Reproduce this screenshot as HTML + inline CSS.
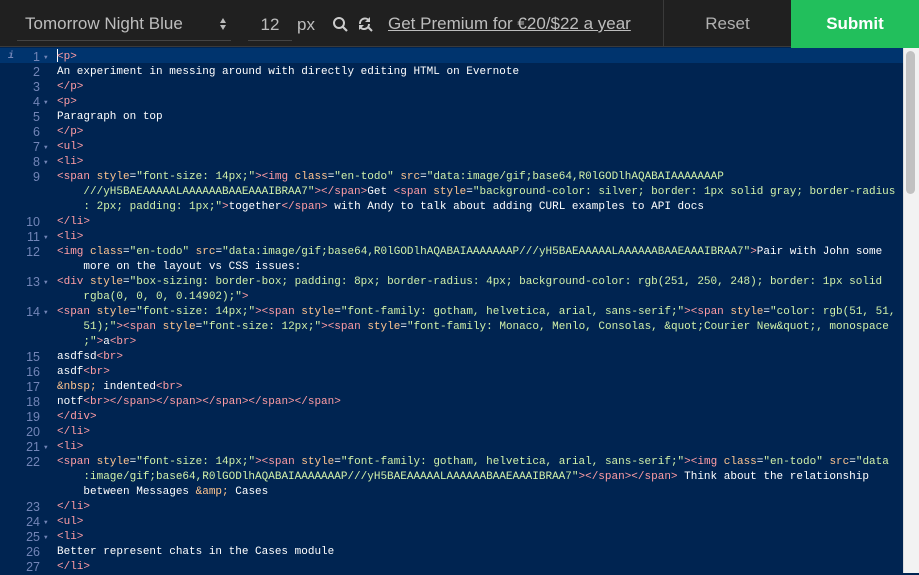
<!DOCTYPE html>
<html><head><meta charset="utf-8"><style>
*{margin:0;padding:0;box-sizing:border-box}
body{width:919px;height:573px;overflow:hidden;background:#002451;font-family:"Liberation Sans",sans-serif;position:relative}
#hdr{position:absolute;left:0;top:0;width:919px;height:47px;background:#202020;border-bottom:1px solid #3a3a3a}
.sel{position:absolute;left:17px;top:12px;width:214px;height:29px;border-bottom:1px solid #444;color:#bdbdbd;font-size:17px;padding-left:8px;line-height:24px}
.arr{position:absolute;right:4px;top:5px;width:8px;height:14px}
.fs{position:absolute;left:248px;top:12px;width:44px;height:29px;border-bottom:1px solid #444;color:#bdbdbd;font-size:17px;text-align:center;line-height:26px}
.px{position:absolute;left:297px;top:15px;color:#bdbdbd;font-size:17px}
.prem{position:absolute;left:388px;top:14px;color:#bdbdbd;font-size:17px;text-decoration:underline}
.reset{position:absolute;left:663px;top:0;width:128px;height:47px;border-left:1px solid #3a3a3a;color:#b0b0b0;font-size:17px;text-align:center;line-height:48px}
.sub{position:absolute;left:791px;top:0;width:128px;height:48px;background:#22bf5c;color:#fff;font-size:17px;font-weight:bold;text-align:center;line-height:48px}
#ed{position:absolute;left:0;top:48px;width:903px;height:525px;font-family:"Liberation Mono",monospace;font-size:11px;color:#fff}
.act{position:absolute;left:0;top:0;width:903px;height:15px;background:#00346e}
#rows{position:absolute;left:0;top:2px;width:903px;height:525px}
.r{position:absolute;left:57px;height:15px;line-height:15px;white-space:pre}
.n{position:absolute;left:0;width:40px;text-align:right;height:15px;line-height:15px;color:#7285b7;font-family:"Liberation Sans",sans-serif;font-size:12.5px}
.f{position:absolute;left:44px;color:#7285b7;font-size:6px;height:15px;line-height:15px}
.t{color:#ff9da4}.a{color:#ffc58f}.s{color:#d1f1a9}.e{color:#ffc58f}
#sb{position:absolute;left:903px;top:48px;width:16px;height:525px;background:#f2f2f2;border-left:1px solid #ddd}
#th{position:absolute;left:906px;top:51px;width:9px;height:143px;background:#c1c1c1;border-radius:5px}
</style></head><body>
<div id="hdr">
<div class="sel">Tomorrow Night Blue<svg class="arr" viewBox="0 0 8 14"><path d="M4 1L7 6H1Z M4 13L7 8H1Z" fill="#bbb"/></svg></div>
<div class="fs">12</div>
<div class="px">px</div>
<svg style="position:absolute;left:332px;top:16px" width="17" height="17" viewBox="0 0 17 17"><circle cx="7" cy="7" r="5" stroke="#ccc" stroke-width="2" fill="none"/><path d="M10.5 10.5L15 15" stroke="#ccc" stroke-width="2.2"/></svg>
<svg style="position:absolute;left:357px;top:16px" width="17" height="17" viewBox="0 0 17 17"><path d="M3 8A5 5 0 0 1 12 4.5M12 8A5 5 0 0 1 3 11" stroke="#ccc" stroke-width="2" fill="none"/><path d="M13 1v5h-5z" fill="#ccc"/><path d="M2 14v-5h5z" fill="#ccc"/><path d="M11 11L15 15" stroke="#ccc" stroke-width="2"/></svg>
<div class="prem">Get Premium for €20/$22 a year</div>
<div class="reset">Reset</div>
<div class="sub">Submit</div>
</div>
<div id="ed">
<div class="act"></div>
<div style="position:absolute;left:8px;top:1px;color:#7285b7;font-size:10px;font-style:italic;font-weight:bold;line-height:15px">i</div>
<div style="position:absolute;left:57px;top:1px;width:1px;height:13px;background:#fff"></div>
<div id="rows">
<div class="n" style="top:0">1</div><div class="f" style="top:0">▼</div><div class="r" style="top:0"><span class="t">&lt;p&gt;</span></div>
<div class="n" style="top:15px">2</div><div class="r" style="top:15px">An experiment in messing around with directly editing HTML on Evernote</div>
<div class="n" style="top:30px">3</div><div class="r" style="top:30px"><span class="t">&lt;/p&gt;</span></div>
<div class="n" style="top:45px">4</div><div class="f" style="top:45px">▼</div><div class="r" style="top:45px"><span class="t">&lt;p&gt;</span></div>
<div class="n" style="top:60px">5</div><div class="r" style="top:60px">Paragraph on top</div>
<div class="n" style="top:75px">6</div><div class="r" style="top:75px"><span class="t">&lt;/p&gt;</span></div>
<div class="n" style="top:90px">7</div><div class="f" style="top:90px">▼</div><div class="r" style="top:90px"><span class="t">&lt;ul&gt;</span></div>
<div class="n" style="top:105px">8</div><div class="f" style="top:105px">▼</div><div class="r" style="top:105px"><span class="t">&lt;li&gt;</span></div>
<div class="n" style="top:120px">9</div><div class="r" style="top:120px"><span class="t">&lt;span </span><span class="a">style</span>=<span class="s">"font-size: 14px;"</span><span class="t">&gt;&lt;img </span><span class="a">class</span>=<span class="s">"en-todo"</span> <span class="a">src</span>=<span class="s">"data:image/gif;base64,R0lGODlhAQABAIAAAAAAAP</span></div>
<div class="r" style="top:135px">    <span class="s">///yH5BAEAAAAALAAAAAABAAEAAAIBRAA7"</span><span class="t">&gt;&lt;/span&gt;</span>Get <span class="t">&lt;span </span><span class="a">style</span>=<span class="s">"background-color: silver; border: 1px solid gray; border-radius</span></div>
<div class="r" style="top:150px">    <span class="s">: 2px; padding: 1px;"</span><span class="t">&gt;</span>together<span class="t">&lt;/span&gt;</span> with Andy to talk about adding CURL examples to API docs</div>
<div class="n" style="top:165px">10</div><div class="r" style="top:165px"><span class="t">&lt;/li&gt;</span></div>
<div class="n" style="top:180px">11</div><div class="f" style="top:180px">▼</div><div class="r" style="top:180px"><span class="t">&lt;li&gt;</span></div>
<div class="n" style="top:195px">12</div><div class="r" style="top:195px"><span class="t">&lt;img </span><span class="a">class</span>=<span class="s">"en-todo"</span> <span class="a">src</span>=<span class="s">"data:image/gif;base64,R0lGODlhAQABAIAAAAAAAP///yH5BAEAAAAALAAAAAABAAEAAAIBRAA7"</span><span class="t">&gt;</span>Pair with John some</div>
<div class="r" style="top:210px">    more on the layout vs CSS issues:</div>
<div class="n" style="top:225px">13</div><div class="f" style="top:225px">▼</div><div class="r" style="top:225px"><span class="t">&lt;div </span><span class="a">style</span>=<span class="s">"box-sizing: border-box; padding: 8px; border-radius: 4px; background-color: rgb(251, 250, 248); border: 1px solid</span></div>
<div class="r" style="top:240px">    <span class="s">rgba(0, 0, 0, 0.14902);"</span><span class="t">&gt;</span></div>
<div class="n" style="top:255px">14</div><div class="f" style="top:255px">▼</div><div class="r" style="top:255px"><span class="t">&lt;span </span><span class="a">style</span>=<span class="s">"font-size: 14px;"</span><span class="t">&gt;&lt;span </span><span class="a">style</span>=<span class="s">"font-family: gotham, helvetica, arial, sans-serif;"</span><span class="t">&gt;&lt;span </span><span class="a">style</span>=<span class="s">"color: rgb(51, 51,</span></div>
<div class="r" style="top:270px">    <span class="s">51);"</span><span class="t">&gt;&lt;span </span><span class="a">style</span>=<span class="s">"font-size: 12px;"</span><span class="t">&gt;&lt;span </span><span class="a">style</span>=<span class="s">"font-family: Monaco, Menlo, Consolas, &amp;quot;Courier New&amp;quot;, monospace</span></div>
<div class="r" style="top:285px">    <span class="s">;"</span><span class="t">&gt;</span>a<span class="t">&lt;br&gt;</span></div>
<div class="n" style="top:300px">15</div><div class="r" style="top:300px">asdfsd<span class="t">&lt;br&gt;</span></div>
<div class="n" style="top:315px">16</div><div class="r" style="top:315px">asdf<span class="t">&lt;br&gt;</span></div>
<div class="n" style="top:330px">17</div><div class="r" style="top:330px"><span class="e">&amp;nbsp;</span> indented<span class="t">&lt;br&gt;</span></div>
<div class="n" style="top:345px">18</div><div class="r" style="top:345px">notf<span class="t">&lt;br&gt;&lt;/span&gt;&lt;/span&gt;&lt;/span&gt;&lt;/span&gt;&lt;/span&gt;</span></div>
<div class="n" style="top:360px">19</div><div class="r" style="top:360px"><span class="t">&lt;/div&gt;</span></div>
<div class="n" style="top:375px">20</div><div class="r" style="top:375px"><span class="t">&lt;/li&gt;</span></div>
<div class="n" style="top:390px">21</div><div class="f" style="top:390px">▼</div><div class="r" style="top:390px"><span class="t">&lt;li&gt;</span></div>
<div class="n" style="top:405px">22</div><div class="r" style="top:405px"><span class="t">&lt;span </span><span class="a">style</span>=<span class="s">"font-size: 14px;"</span><span class="t">&gt;&lt;span </span><span class="a">style</span>=<span class="s">"font-family: gotham, helvetica, arial, sans-serif;"</span><span class="t">&gt;&lt;img </span><span class="a">class</span>=<span class="s">"en-todo"</span> <span class="a">src</span>=<span class="s">"data</span></div>
<div class="r" style="top:420px">    <span class="s">:image/gif;base64,R0lGODlhAQABAIAAAAAAAP///yH5BAEAAAAALAAAAAABAAEAAAIBRAA7"</span><span class="t">&gt;&lt;/span&gt;&lt;/span&gt;</span> Think about the relationship</div>
<div class="r" style="top:435px">    between Messages <span class="e">&amp;amp;</span> Cases</div>
<div class="n" style="top:450px">23</div><div class="r" style="top:450px"><span class="t">&lt;/li&gt;</span></div>
<div class="n" style="top:465px">24</div><div class="f" style="top:465px">▼</div><div class="r" style="top:465px"><span class="t">&lt;ul&gt;</span></div>
<div class="n" style="top:480px">25</div><div class="f" style="top:480px">▼</div><div class="r" style="top:480px"><span class="t">&lt;li&gt;</span></div>
<div class="n" style="top:495px">26</div><div class="r" style="top:495px">Better represent chats in the Cases module</div>
<div class="n" style="top:510px">27</div><div class="r" style="top:510px"><span class="t">&lt;/li&gt;</span></div>
</div>
</div>
<div id="sb"></div><div id="th"></div>
</body></html>
